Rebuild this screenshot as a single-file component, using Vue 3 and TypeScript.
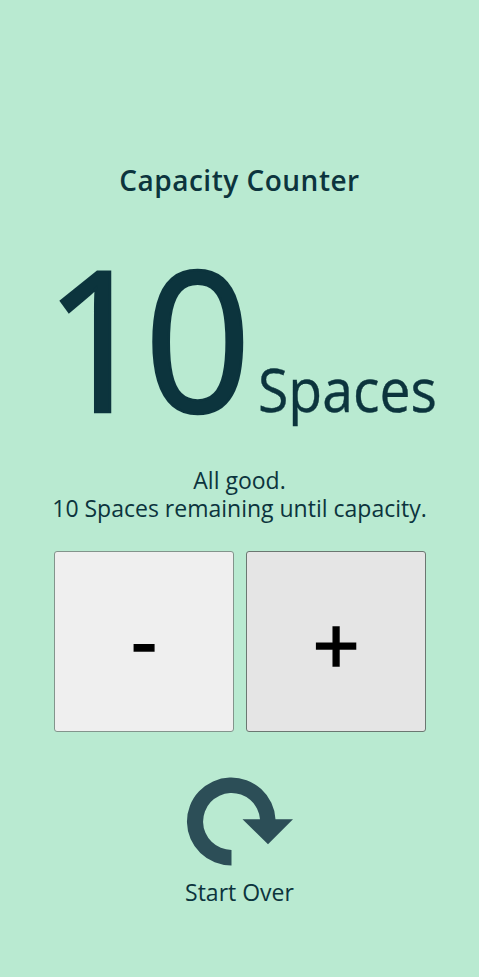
<script setup lang="ts">
import { computed, ref } from 'vue'

const capacity = 10
const spaces = ref<number>(capacity)
const status = computed<string>(() => (spaces.value > 0 ? 'All good.' : 'At capacity.'))

function step(amount: number): void {
  spaces.value = Math.min(capacity, Math.max(0, spaces.value + amount))
}

function reset(): void {
  spaces.value = capacity
}
</script>

<template>
  <main class="counter">
    <h1 class="title"><span>Capacity Counter</span></h1>
    <div class="readout">
      <span class="number">{{ spaces }}</span>
      <span class="unit">Spaces</span>
    </div>
    <div class="message">
      <p class="status">{{ status }}</p>
      <p class="remaining">{{ spaces }} Spaces remaining until capacity.</p>
    </div>
    <div class="controls">
      <button class="minus" type="button" @click="step(-1)"><span>-</span></button>
      <button class="plus" type="button" @click="step(1)"><span>+</span></button>
    </div>
    <div class="restart" @click="reset">
      <svg class="arrow" width="108" height="90" viewBox="0 0 108 90" aria-hidden="true">
        <path
          d="M45.5 88.5A44.3 44 0 1 1 89.5 42.3H107L82 67.3L56.5 42.3H74A28.5 28.5 0 1 0 45.5 73Z"
          fill="#2c4e57"
        />
      </svg>
      <span class="label">Start Over</span>
    </div>
  </main>
</template>

<style>
body {
  background: #b9ead1;
}
</style>

<style scoped>
.counter {
  box-sizing: border-box;
  height: 977px;
  padding-top: 159px;
  display: flex;
  flex-direction: column;
  align-items: center;
  background: #b9ead1;
  color: #0c343d;
  font-family: 'Trebuchet MS', 'Open Sans', sans-serif;
  font-size: 24px;
  white-space: nowrap;
  overflow: hidden;
}

.title {
  margin: 0;
  height: 42px;
  font-size: 28px;
  font-weight: 600;
  line-height: 42px;
  letter-spacing: 0.5px;
}

.readout {
  width: 479px;
  height: 264px;
  box-sizing: border-box;
  padding-left: 44px;
  display: flex;
  align-items: baseline;
}

.number {
  width: 214px;
  font-size: 196px;
  line-height: 271px;
  letter-spacing: -8px;
  transform: scaleX(0.96);
  transform-origin: left;
  -webkit-text-stroke: 2.5px #0c343d;
}

.unit {
  font-size: 61px;
  line-height: 60px;
  transform: scaleX(0.907);
  transform-origin: left;
  -webkit-text-stroke: 0.4px #0c343d;
}

.message {
  height: 86px;
  padding-top: 1px;
  box-sizing: border-box;
  text-align: center;
}

.message p {
  margin: 0;
  font-size: 23px;
  line-height: 28px;
}

.controls {
  display: flex;
  gap: 12px;
}

.controls button {
  width: 180px;
  height: 181px;
  padding: 1px 0 0 1px;
  border: 1px solid #83948c;
  border-radius: 3px;
  background: #efefef;
  color: #000;
  font-family: 'Liberation Sans', sans-serif;
  font-size: 80px;
  -webkit-text-stroke: 1.5px #000;
}

.controls .plus {
  padding-top: 9px;
  border-color: #6b7771;
  background: #e5e5e5;
}

.restart {
  margin-top: 45px;
  display: flex;
  flex-direction: column;
  align-items: center;
}

.arrow {
  margin-left: 0.5px;
}

.label {
  font-size: 23px;
  line-height: 51px;
}
</style>
